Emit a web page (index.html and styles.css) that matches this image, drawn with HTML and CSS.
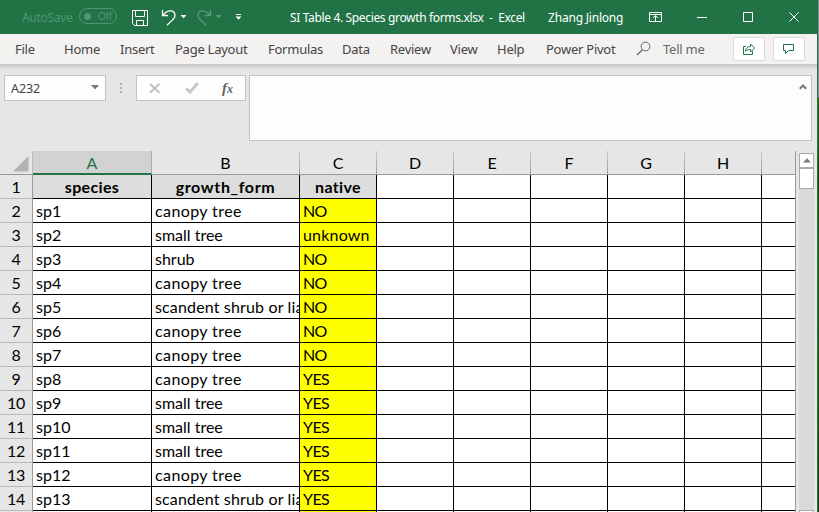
FILE: index.html
```html
<!DOCTYPE html>
<html lang="en">
<head>
<meta charset="utf-8">
<title>SI Table 4. Species growth forms.xlsx - Excel</title>
<link rel="stylesheet" href="styles.css">
</head>
<body>
<div class="desktop">
<div class="window">
  <header class="titlebar">
    <span class="autosave">AutoSave</span>
    <span class="toggle"><i></i><span>Off</span></span>
    <svg class="quick" width="114" height="22" viewBox="130 6 114 22" fill="none" stroke="#fff">
      <path d="M132.500 10.500h15v15h-13l-2-2zM135.500 10.500v6h9v-6M136.500 25.500v-5h7v5"/>
      <path d="M162.500 10v5.500h5.500M163 15.200c4-5.500 12-6 12 .2 0 2.200-1 3.300-8 9.900" stroke-width="1.300"/>
      <path d="M180.500 15h6l-3 3.200z" fill="#fff" stroke="none"/>
      <g opacity=".28"><path d="M210.500 10v5.500H205M210 15.200c-4-5.500-12-6-12 .2 0 2.200 1 3.300 8 9.900" stroke-width="1.300"/><path d="M215.500 15h6l-3 3.200z" fill="#fff" stroke="none"/></g>
      <path d="M236 14.500h5"/><path d="M235.500 16.500h6l-3 3.300z" fill="#fff" stroke="none"/>
    </svg>
    <span class="doc">SI Table 4. Species growth forms.xlsx&nbsp; -&nbsp; Excel</span>
    <span class="user">Zhang Jinlong</span>
    <svg class="controls" width="160" height="20" viewBox="645 6 160 20" fill="none" stroke="#fff">
      <path d="M649.500 11.500h12v9h-12zM649.500 13.500h12M655.500 20v-5M653 17l2.500-2.500 2.500 2.500M697 16.500h10M743.500 11.500h9v9h-9z"/>
      <path d="M789.500 11.500l9 9M798.500 11.500l-9 9"/>
    </svg>
  </header>
  <nav class="tabs">
    <span>File</span><span>Home</span><span>Insert</span><span>Page Layout</span><span>Formulas</span><span>Data</span><span>Review</span><span>View</span><span>Help</span><span>Power Pivot</span>
    <svg width="16" height="16" viewBox="0 0 16 16" fill="none" stroke="#666"><circle cx="9.500" cy="5.500" r="4.400"/><path d="M6.300 8.800L1 14" stroke-width="1.300"/></svg>
    <span class="tell">Tell me</span>
    <button aria-label="Share"><svg width="14" height="14" viewBox="0 0 14 14" fill="none" stroke="#217346"><path d="M4 4.500H1.500v8h9V9M3.500 9c0-3 2-4.500 5-4.500V2l4 4-4 4V7.500C6.500 7.500 5 8 3.500 9z"/></svg></button>
    <button aria-label="Comments"><svg width="14" height="14" viewBox="0 0 14 14" fill="none" stroke="#217346"><path d="M1.500 2.500h10v6h-5l-3 3v-3h-2z"/></svg></button>
  </nav>
  <section class="formula-row">
    <div class="namebox"><span>A232</span><svg width="8" height="5"><path d="M0 0h8L4 4.500z" fill="#777"/></svg></div>
    <div class="dots"><i></i><i></i><i></i></div>
    <div class="actions">
      <svg width="12" height="11" viewBox="0 0 12 11"><path d="M1 .8l9.500 9M10.500.8L1 9.800" stroke="#c3c3c3" stroke-width="2"/></svg>
      <svg width="14" height="12" viewBox="0 0 14 12"><path d="M1 6.500l4 3.500L12.800 1" fill="none" stroke="#c6c6c6" stroke-width="2.800"/></svg>
      <span class="fx">f<small>x</small></span>
    </div>
    <div class="formula"><svg width="8" height="6" viewBox="0 0 8 6"><path d="M.8 4.700L4 1.500l3.200 3.200" fill="none" stroke="#777" stroke-width="2"/></svg></div>
  </section>
  <main class="workspace">
    <table class="sheet">
      <colgroup><col class="n"><col class="a"><col class="b"><col class="c"><col class="c"><col class="c"><col class="c"><col class="c"><col class="c"><col class="last"></colgroup>
      <thead><tr><th class="corner"><svg width="16" height="16"><path d="M15.500 0v15.500H0z" fill="#b2b2b2"/></svg></th><th class="active">A</th><th>B</th><th>C</th><th>D</th><th>E</th><th>F</th><th>G</th><th>H</th><th class="end"></th></tr></thead>
      <tbody>
      <tr class="labels"><th>1</th><td>species</td><td>growth_form</td><td>native</td><td></td><td></td><td></td><td></td><td></td><td></td></tr>
      <tr class="canopy"><th>2</th><td>sp1</td><td>canopy tree</td><td>NO</td><td></td><td></td><td></td><td></td><td></td><td></td></tr>
      <tr><th>3</th><td>sp2</td><td>small tree</td><td class="unknown">unknown</td><td></td><td></td><td></td><td></td><td></td><td></td></tr>
      <tr><th>4</th><td>sp3</td><td>shrub</td><td>NO</td><td></td><td></td><td></td><td></td><td></td><td></td></tr>
      <tr class="canopy"><th>5</th><td>sp4</td><td>canopy tree</td><td>NO</td><td></td><td></td><td></td><td></td><td></td><td></td></tr>
      <tr class="scandent"><th>6</th><td>sp5</td><td>scandent shrub or lia</td><td>NO</td><td></td><td></td><td></td><td></td><td></td><td></td></tr>
      <tr class="canopy"><th>7</th><td>sp6</td><td>canopy tree</td><td>NO</td><td></td><td></td><td></td><td></td><td></td><td></td></tr>
      <tr class="canopy"><th>8</th><td>sp7</td><td>canopy tree</td><td>NO</td><td></td><td></td><td></td><td></td><td></td><td></td></tr>
      <tr class="canopy"><th>9</th><td>sp8</td><td>canopy tree</td><td>YES</td><td></td><td></td><td></td><td></td><td></td><td></td></tr>
      <tr><th>10</th><td>sp9</td><td>small tree</td><td>YES</td><td></td><td></td><td></td><td></td><td></td><td></td></tr>
      <tr><th>11</th><td>sp10</td><td>small tree</td><td>YES</td><td></td><td></td><td></td><td></td><td></td><td></td></tr>
      <tr><th>12</th><td>sp11</td><td>small tree</td><td>YES</td><td></td><td></td><td></td><td></td><td></td><td></td></tr>
      <tr class="canopy"><th>13</th><td>sp12</td><td>canopy tree</td><td>YES</td><td></td><td></td><td></td><td></td><td></td><td></td></tr>
      <tr class="scandent"><th>14</th><td>sp13</td><td>scandent shrub or lia</td><td>YES</td><td></td><td></td><td></td><td></td><td></td><td></td></tr>
      <tr><th></th><td></td><td></td><td></td><td></td><td></td><td></td><td></td><td></td><td></td></tr>
      </tbody>
    </table>
    <div class="scrollbar"><div class="up"><svg width="8" height="5"><path d="M0 4.500h8L4 .3z" fill="#777"/></svg></div><div class="thumb"></div><div class="track"></div><div class="stop"></div></div>
  </main>
</div>
</div>
</body>
</html>
```
FILE: styles.css
```css
* { box-sizing: border-box; }
body { margin: 0; overflow: hidden; font-family: "Noto Sans", sans-serif; }
svg { display: block; flex: none; }
.desktop { width: 819px; height: 512px; overflow: hidden; background: linear-gradient(#80908c 0 97px, #285f0c 98px 140px, #17420b 170px, #28680f 260px, #163d0b); }
.window { width: 818px; height: 512px; background: #e6e6e6; border-right: 1px solid #217346; overflow: hidden; }

.titlebar { height: 34px; background: #217346; color: #fff; display: flex; align-items: center; font-size: 12px; white-space: nowrap; }
.autosave { width: 57px; margin-left: 22px; color: #4f9870; letter-spacing: -.3px; }
.toggle { width: 38px; height: 16px; border: 1px solid #4f9870; border-radius: 8px; display: flex; align-items: center; padding-left: 4px; color: #4f9870; font-size: 10px; letter-spacing: -.3px; margin-top: -2px; }
.toggle i { width: 7px; height: 7px; border-radius: 50%; background: #4f9870; margin-right: 7px; }
.quick { margin-left: 13px; }
.doc { width: 258px; margin-left: 46px; letter-spacing: -.35px; }
.user { width: 97px; letter-spacing: -.2px; }

.tabs { height: 30px; background: #f3f2f1; color: #444; font-size: 13px; letter-spacing: -.25px; display: grid; grid-template-columns: 49px 56px 55px 93px 74px 48px 60px 47px 49px 90px 27px 70px 40px 32px; align-items: center; padding-left: 15px; white-space: nowrap; }
.tell { color: #666; }
.tabs button { width: 32px; height: 24px; padding: 0; border: 1px solid #dddbd9; border-radius: 2px; background: #fff; display: flex; align-items: center; justify-content: center; }

.formula-row { height: 87px; padding: 11px 5px 0 4px; display: flex; align-items: flex-start; background: linear-gradient(#c8c8c8, #e6e6e6 6px); }
.namebox { width: 102px; height: 26px; border: 1px solid #c3c3c3; background: #fdfdfd; display: flex; align-items: center; justify-content: space-between; padding: 0 6px; font-size: 12.500px; letter-spacing: -.1px; color: #444; }
.namebox svg { margin-top: -1px; }
.dots { width: 30px; height: 26px; display: flex; flex-direction: column; align-items: center; justify-content: center; gap: 2px; }
.dots i { width: 2px; height: 2px; background: #aaa; }
.actions { width: 110px; height: 26px; border: 1px solid #c3c3c3; background: #fdfdfd; display: flex; align-items: center; padding-left: 12px; }
.actions svg + svg { margin-left: 24px; }
.fx { margin-left: 23px; font: italic bold 15px/20px "Liberation Serif", serif; color: #666; }
.fx small { font-size: 12px; }
.formula { width: 563px; height: 66px; margin-left: 3px; border: 1px solid #c3c3c3; background: #fdfdfd; display: flex; justify-content: flex-end; padding: 8px 4px; }

.workspace { height: 361px; display: flex; align-items: flex-start; }
.sheet { width: 796px; table-layout: fixed; border-collapse: separate; border-spacing: 0; font: 16px/22px Lato, sans-serif; color: #000; border-right: 1px solid #999; flex: none; }
.n { width: 33px; }
.a { width: 119px; }
.b { width: 148px; }
.c { width: 77px; }
.last { width: 33px; }
.sheet th { height: 24px; padding: 0; background: #e6e6e6; font-weight: 400; text-align: center; }
.sheet thead th { border-bottom: 1px solid #999; border-right: 1px solid; border-image: linear-gradient(#ccc, #999) 1; line-height: 23px; }
.sheet thead .active { background: #d2d2d2; color: #217346; border-bottom: 2px solid #217346; border-image: none; border-right-color: #aaa; line-height: 21px; padding-top: 1px; }
.sheet thead .end { border-right: 0; }
.sheet thead .corner { border-image: none; border-right-color: #bbb; }
.corner svg { margin: 2px 0 0 13px; }
.sheet tbody th { border-right: 1px solid #999; border-bottom: 1px solid #b8b8b8; letter-spacing: -.3px; }
.sheet td { height: 24px; padding: 0 0 0 3px; background: #fff; border-right: 1px solid #000; border-bottom: 1px solid #000; white-space: nowrap; overflow: hidden; }
.sheet td:last-child { border-right: 0; }
.sheet td:nth-child(4) { background: #ff0; letter-spacing: -.6px; }
.sheet td.unknown:nth-child(4) { letter-spacing: .2px; }
.canopy td:nth-child(3) { letter-spacing: .4px; }
.scandent td:nth-child(3) { letter-spacing: .15px; }
.sheet .labels td { font-weight: 700; text-align: center; padding: 0; letter-spacing: .35px; }
.sheet .labels td:nth-child(3) { letter-spacing: .65px; }
.sheet .labels td:nth-child(-n+4) { background: #ddd; }

.scrollbar { width: 15px; height: 359px; margin: 2px 0 0 3px; display: flex; flex-direction: column; }
.up { height: 15px; border: 1px solid #aaa; background: #fff; display: flex; align-items: center; justify-content: center; }
.thumb { height: 21px; border: 1px solid #aaa; background: #fff; }
.track { flex: 1; background: #dadada; }
.stop { height: 2px; border: 1px solid #aaa; border-bottom: 0; background: #fff; }
```
